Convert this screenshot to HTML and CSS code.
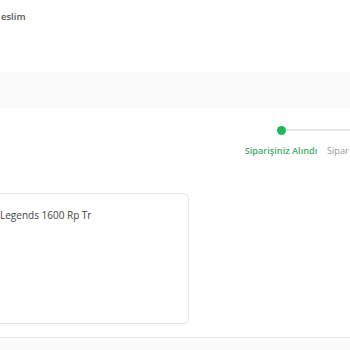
FILE: index.html
```html
<!DOCTYPE html>
<html>
<head>
<meta charset="utf-8">
<link rel="stylesheet" href="styles.css">
</head>
<body>
<div class="page">
  <div class="title">eslim</div>
  <div class="band"></div>
  <div class="steps">
    <div class="step active">
      <div class="track"><span class="dot"></span><span class="line"></span></div>
      <div class="label">Siparişiniz Alındı</div>
    </div>
    <div class="step">
      <div class="track"><span class="dot"></span><span class="line"></span></div>
      <div class="label">Sipar</div>
    </div>
  </div>
  <div class="card">
    <div class="product">Legends 1600 Rp Tr</div>
  </div>
  <div class="footer"></div>
</div>
</body>
</html>
```
FILE: styles.css
```css
html, body {
  margin: 0;
  padding: 0;
  background: #ffffff;
  overflow: hidden;
}
.page {
  width: 350px;
  height: 350px;
  overflow: hidden;
  font-family: "Open Sans", "Noto Sans", sans-serif;
  color: #555;
}
.title {
  padding-left: 1px;
  padding-top: 11px;
  font-size: 9.5px;
  font-weight: 600;
  line-height: 12px;
  color: #555;
}
.band {
  margin-top: 49px;
  height: 36px;
  background: #fafafa;
}
.steps {
  display: flex;
  margin-top: 17px;
  margin-left: 236px;
  white-space: nowrap;
}
.step {
  width: 90px;
  flex: none;
  display: flex;
  flex-direction: column;
  align-items: center;
}
.step + .step {
  align-items: flex-start;
}
.track {
  position: relative;
  width: 100%;
  height: 10px;
  display: flex;
  justify-content: center;
  align-items: center;
}
.step + .step .track {
  visibility: hidden;
}
.dot {
  width: 9px;
  height: 9px;
  border-radius: 50%;
  background: #d8d8d8;
  z-index: 1;
}
.step.active .dot {
  background: #1fb95a;
}
.line {
  position: absolute;
  left: 50%;
  width: 100%;
  top: 4px;
  height: 2px;
  background: #e8e8e8;
}
.label {
  margin-top: 10px;
  font-size: 9.2px;
  line-height: 12px;
  font-weight: 600;
  color: #999;
}
.step + .step .label {
  margin-left: 1px;
  font-weight: 400;
}
.step.active .label {
  color: #42ad6c;
}
.card {
  margin-top: 36px;
  margin-left: -20px;
  width: 207px;
  height: 115px;
  border: 1px solid #e6e6e6;
  border-radius: 6px;
  box-shadow: 0 1px 2px rgba(0,0,0,0.05);
  padding: 14px 0 0 0;
}
.product {
  padding-left: 19px;
  font-size: 10px;
  line-height: 14px;
  color: #444;
  white-space: nowrap;
}
.footer {
  margin-top: 13px;
  height: 20px;
  border-top: 1px solid #ececec;
  background: #fbfbfb;
}
```
